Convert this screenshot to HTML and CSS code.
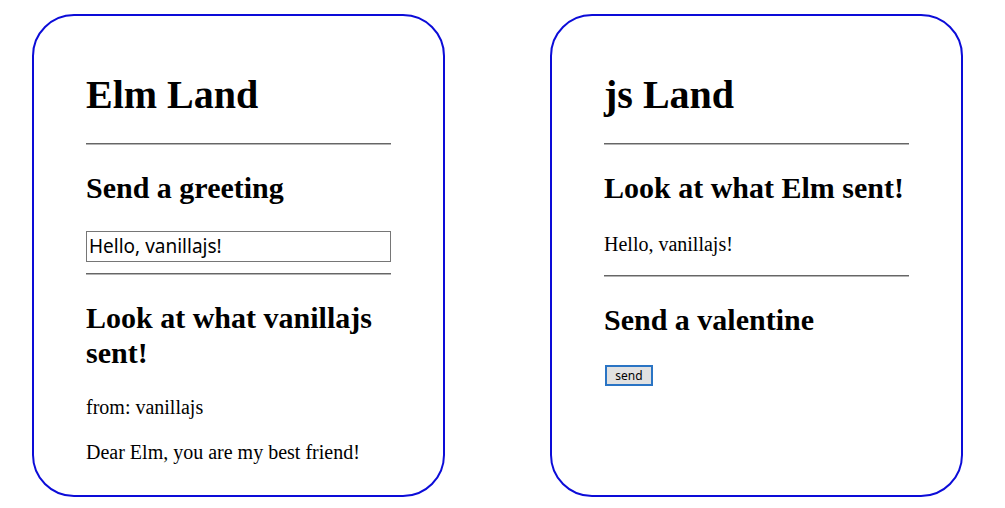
FILE: index.html
```html
<!DOCTYPE html>
<html>
<head>
<meta charset="utf-8">
<link rel="stylesheet" href="styles.css">
</head>
<body>
<div class="row">
  <section class="card">
    <h1 class="title">Elm Land</h1>
    <hr class="rule">
    <h2 class="heading">Send a greeting</h2>
    <input class="field" type="text" value="Hello, vanillajs!">
    <hr class="rule">
    <h2 class="heading">Look at what vanillajs sent!</h2>
    <p class="text">from: vanillajs</p>
    <p class="text">Dear Elm, you are my best friend!</p>
  </section>
  <section class="card">
    <h1 class="title">js Land</h1>
    <hr class="rule">
    <h2 class="heading">Look at what Elm sent!</h2>
    <p class="text text-msg">Hello, vanillajs!</p>
    <hr class="rule">
    <h2 class="heading">Send a valentine</h2>
    <button class="btn" type="button">send</button>
  </section>
</div>
</body>
</html>
```

FILE: styles.css
```css
html, body {
  margin: 0;
  padding: 0;
  background: #fff;
}
body {
  font-family: "Liberation Serif", "Times New Roman", serif;
  font-size: 20px;
  color: #000;
}
.row {
  display: flex;
  align-items: flex-start;
  gap: 105px;
  padding: 14px 0 0 32px;
}
.card {
  display: block;
  width: 305px;
  height: 450px;
  border: 2px solid #0c0cd8;
  border-radius: 42px;
  padding: 29px 52px 0 52px;
}
.title {
  font-size: 40px;
  line-height: 46px;
  font-weight: bold;
  margin: 26.8px 0 25.2px 0;
}
.heading {
  font-size: 30px;
  line-height: 35px;
  font-weight: bold;
  margin: 25px 0;
}
.rule {
  display: block;
  margin: 10px 0;
  height: 0;
  border: 0;
  border-top: 1px solid #666;
  border-bottom: 1px solid #b4b4b4;
}
.text {
  font-size: 20px;
  line-height: 25px;
  margin: 20px 0;
}
.text-msg {
  margin-top: 27px;
  margin-bottom: 18px;
}
.field {
  display: block;
  box-sizing: border-box;
  width: 305px;
  height: 31px;
  margin: 26px 0 11px 0;
  padding: 0 2px;
  border: 1px solid #767676;
  font-family: "Noto Sans", sans-serif;
  font-size: 19px;
  color: #000;
}
.btn {
  display: block;
  box-sizing: border-box;
  width: 48px;
  height: 21px;
  margin: 28px 0 0 1px;
  padding: 0;
  border: 2px solid #2a74c4;
  background: #e1e1e1;
  font-family: "Noto Sans", sans-serif;
  font-size: 12px;
  line-height: 15px;
  color: #000;
}
```
